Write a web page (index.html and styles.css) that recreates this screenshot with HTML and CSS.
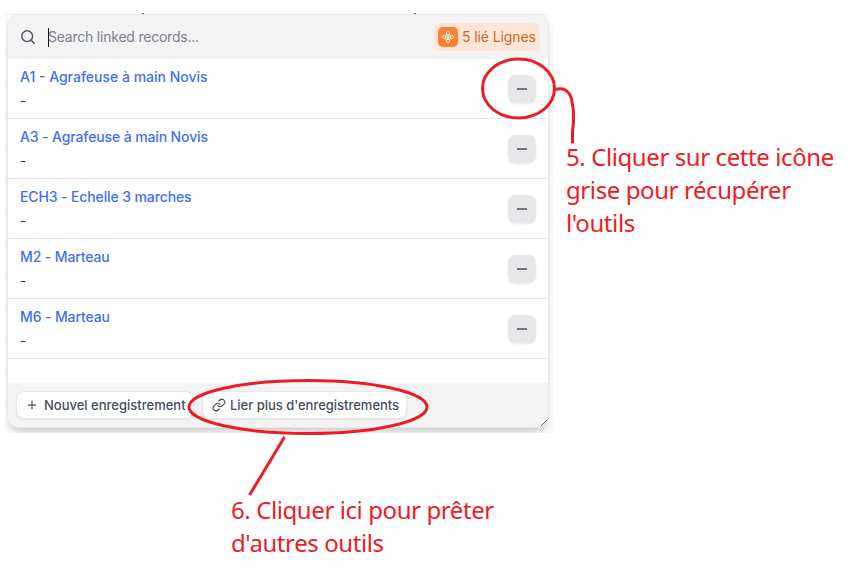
FILE: index.html
```html
<!DOCTYPE html>
<html lang="fr">
<head>
<meta charset="utf-8">
<title>Enregistrements liés</title>
<link rel="stylesheet" href="styles.css">
</head>
<body>
<main class="stage">
  <div class="capture">
    <i class="tick tick-a"></i><i class="tick tick-b"></i>
    <section class="panel">
      <header class="head">
        <svg class="search" viewBox="0 0 16 16"><circle cx="7.2" cy="7.2" r="5.4"/><path d="M11.2 11.2 14.2 14.2"/></svg>
        <div class="field"><span>Search linked records...</span></div>
        <div class="badge">
          <svg class="badge-icon" viewBox="0 0 20 20"><rect width="20" height="20" rx="5"/><circle cx="10" cy="6.200" r="1.7"/><circle cx="10" cy="13.800" r="1.7"/><circle cx="6.200" cy="10" r="1.7"/><circle cx="13.800" cy="10" r="1.7"/><path d="M10 8v4M8 10h4M8.600 7.300 7.300 8.600M11.400 7.300l1.300 1.300M8.600 12.700l-1.300-1.300M11.400 12.700l1.300-1.300"/></svg>
          <span>5 lié Lignes</span>
        </div>
      </header>
      <ul class="rows">
        <li class="row"><div><div class="name name-a1">A1 - Agrafeuse à main Novis</div><div class="value">-</div></div><button class="minus"></button></li>
        <li class="row"><div><div class="name">A3 - Agrafeuse à main Novis</div><div class="value">-</div></div><button class="minus"></button></li>
        <li class="row"><div><div class="name">ECH3 - Echelle 3 marches</div><div class="value">-</div></div><button class="minus"></button></li>
        <li class="row"><div><div class="name">M2 - Marteau</div><div class="value">-</div></div><button class="minus"></button></li>
        <li class="row"><div><div class="name">M6 - Marteau</div><div class="value">-</div></div><button class="minus"></button></li>
      </ul>
      <footer class="foot">
        <button class="btn btn-new"><svg class="plus" viewBox="0 0 12 12"><path d="M6 1v10M1 6h10"/></svg><span>Nouvel enregistrement</span></button>
        <button class="btn btn-link"><svg class="link" viewBox="0 0 24 24"><path d="M10 13a5 5 0 0 0 7.54.54l3-3a5 5 0 0 0-7.07-7.07l-1.72 1.71"/><path d="M14 11a5 5 0 0 0-7.54-.54l-3 3a5 5 0 0 0 7.07 7.07l1.71-1.71"/></svg><span>Lier plus d'enregistrements</span></button>
        <svg class="grip" viewBox="0 0 8 8"><path d="M.5 7.5l7-7M4.5 7.5l3-3"/></svg>
      </footer>
    </section>
  </div>
  <svg class="marks" viewBox="0 0 854 574">
    <ellipse cx="518.5" cy="88.5" rx="36" ry="29.5"/>
    <ellipse cx="308" cy="407" rx="119" ry="26.5"/>
    <path d="M555 89.5C563 87 569 90 571.5 99C574 110 574 122 572.5 131V143.500"/>
    <path d="M284.500 437 249.500 495"/>
  </svg>
  <p class="note note-five">5. Cliquer sur cette icône<br>grise pour récupérer<br>l'outils</p>
  <p class="note note-six">6. Cliquer ici pour prêter<br>d'autres outils</p>
</main>
</body>
</html>
```
FILE: styles.css
```css
* { box-sizing: border-box; }
body { margin: 0; background: #fff; font-family: Inter, "Liberation Sans", sans-serif; }
.stage { position: relative; width: 854px; height: 574px; overflow: hidden; padding: 13px 0 0 5px; }
svg { fill: none; flex: none; }
button { border: 0; padding: 0; margin: 0; font: inherit; }
.capture {
  position: relative; width: 548px; height: 420px; padding: 1px 4px 5px 2px; overflow: hidden;
  background: linear-gradient(#fcfcfc, #fcfcfc) 100% 0 / 6px 100% no-repeat, repeating-linear-gradient(#fbfbfb 0 31px, #eeeeef 31px 32px) 0 6px;
}
.tick { position: absolute; top: 0; width: 2px; height: 1px; background: #3366ff; }
.tick-a { left: 137px; }
.tick-b { left: 409px; }
.panel {
  position: relative; display: flex; flex-direction: column; width: 542px; height: 414px;
  border: 1px solid #e7e7e9; border-radius: 12px; background: #fff; overflow: hidden;
  box-shadow: 0 4px 6px -2px rgba(0, 0, 0, .1), 0 8px 12px -4px rgba(0, 0, 0, .12);
}
.head { display: flex; align-items: center; height: 44px; padding: 0 8px 0 12px; background: #f3f3f3; }
.search { width: 16px; height: 16px; stroke: #4a5268; stroke-width: 1.4; stroke-linecap: round; }
.field { flex: 1; margin-left: 12px; border-left: 1px solid #111; height: 19px; line-height: 18px; font-size: 14px; color: #7b8090; letter-spacing: -.22px; }
.field span { margin-left: -1px; }
.badge { display: flex; align-items: center; gap: 4px; width: 106px; height: 28px; padding: 0 4px; border-radius: 6px; background: #fee6d6; color: #c86827; font-size: 14px; white-space: nowrap; letter-spacing: -.1px; }
.badge-icon { width: 20px; height: 20px; stroke: #fff; stroke-width: 1; }
.badge-icon rect { fill: #fa8231; stroke: none; }
.badge span { margin-top: -1px; }
.rows { margin: 0; padding: 0; list-style: none; flex: 1; }
.row { display: flex; justify-content: space-between; align-items: center; height: 60px; padding: 0 12px; border-bottom: 1px solid #e7e7e9; }
.name { height: 24px; line-height: 24px; font-size: 14px; font-weight: 500; color: #4070f4; letter-spacing: -.12px; }
.name-a1 { letter-spacing: 0; }
.value { height: 24px; line-height: 25px; font-size: 13px; color: #333; }
.minus { display: grid; place-items: center; width: 28px; height: 28px; border-radius: 8px; background: #e7e7e9; box-shadow: 0 1px 2px rgba(0, 0, 0, .1); }
.minus::before { content: ""; width: 10px; height: 2px; background: #707585; }
.foot { position: relative; display: flex; align-items: center; gap: 8px; height: 44px; padding: 0 8px; background: #f3f3f3; }
.btn { display: flex; align-items: center; height: 28px; border: 1px solid #e7e7e9; border-radius: 8px; background: #fff; box-shadow: 0 1px 2px rgba(0, 0, 0, .08); color: #454d60; font-size: 13px; font-weight: 500; white-space: nowrap; }
.btn-new { width: 178px; padding-left: 10px; gap: 7px; }
.btn-link { width: 205px; padding-left: 9px; gap: 4px; }
.btn-link span { letter-spacing: -.02px; }
.plus { width: 10px; height: 10px; stroke: #4a5268; stroke-width: 1.5; }
.link { width: 14px; height: 14px; stroke: #454d60; stroke-width: 2; stroke-linecap: round; stroke-linejoin: round; }
.grip { position: absolute; right: 0; bottom: 0; width: 8px; height: 8px; stroke: #555; stroke-width: .9; }
.marks { position: absolute; inset: 0; width: 854px; height: 574px; stroke: #ed1c24; stroke-width: 3; }
.note { position: absolute; margin: 0; font: 24px/33px "Noto Sans", sans-serif; letter-spacing: -.41px; color: #ed1c24; white-space: nowrap; }
.note-five { left: 566px; top: 140px; }
.note-six { left: 231px; top: 493px; }
```
